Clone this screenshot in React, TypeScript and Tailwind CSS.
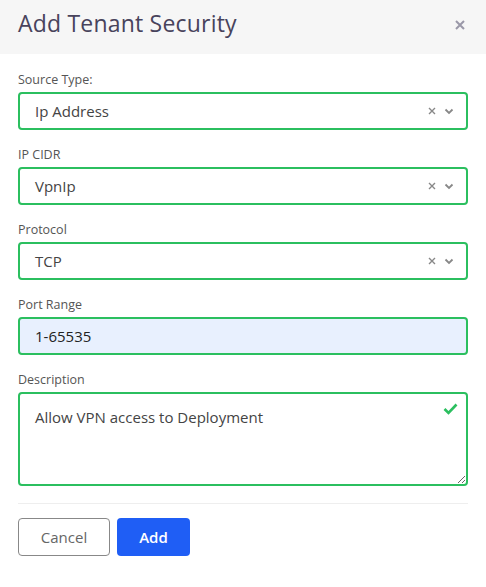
import React from 'react';

const font = { fontFamily: '"Open Sans", "Liberation Sans", sans-serif' };

const Label: React.FC<{ text: string }> = ({ text }) => (
  <div className="h-[18px] flex items-center text-[12.5px] text-[#555]">{text}</div>
);

const SelectBox: React.FC<{ label: string; value: string }> = ({ label, value }) => (
  <div className="mb-[16px]">
    <Label text={label} />
    <div className="mt-[3px] h-[38px] border-2 border-[#2bbf5f] rounded-[4px] flex items-center pl-[15px] pr-[12px]">
      <span className="flex-1 text-[15px] text-[#444]">{value}</span>
      <svg width="8" height="8" viewBox="0 0 8 8" className="mr-[8px]">
        <path d="M1 1L7 7M7 1L1 7" stroke="#888" strokeWidth="1.4" />
      </svg>
      <svg width="10" height="7" viewBox="0 0 10 7">
        <path d="M1.5 1.5L5 5L8.5 1.5" stroke="#888" strokeWidth="1.8" fill="none" />
      </svg>
    </div>
  </div>
);

export default function App() {
  return (
    <div className="w-[486px] h-[587px] bg-white" style={font}>
      <div className="h-[54px] bg-[#f6f6f6] flex items-start justify-between px-[18px] pt-[8px]">
        <h2 className="text-[23px] leading-[30px] tracking-[0.2px] text-[#48435c] font-medium">Add Tenant Security</h2>
        <svg width="10" height="10" viewBox="0 0 10 10" className="mt-[12px] mr-[3px]">
          <path d="M1 1L9 9M9 1L1 9" stroke="#9a98a8" strokeWidth="2" />
        </svg>
      </div>
      <div className="px-[18px] pt-[17px]">
        <SelectBox label="Source Type:" value="Ip Address" />
        <SelectBox label="IP CIDR" value="VpnIp" />
        <SelectBox label="Protocol" value="TCP" />
        <div className="mb-[16px]">
          <Label text="Port Range" />
          <div className="mt-[3px] h-[38px] border-2 border-[#2bbf5f] rounded-[4px] bg-[#e8f0fe] flex items-center pl-[15px] text-[15px] text-[#222]">
            1-65535
          </div>
        </div>
        <div>
          <Label text="Description" />
          <div className="relative mt-[3px]">
            <textarea
              readOnly
              defaultValue="Allow VPN access to Deployment"
              className="block w-full h-[94px] border-2 border-[#2bbf5f] rounded-[4px] pl-[15px] pr-[40px] pt-[12px] text-[15px] text-[#444] outline-none"
              style={font}
            />
            <svg width="15" height="12" viewBox="0 0 15 12" className="absolute right-[10px] top-[11px]">
              <path d="M1.5 6L5.5 10L13.5 1.5" stroke="#2bbf5f" strokeWidth="2.6" fill="none" />
            </svg>
          </div>
        </div>
        <div className="mt-[17px] border-t border-[#eee]" />
        <div className="mt-[14px] flex gap-[7px]">
          <button className="h-[38px] w-[92px] border border-[#888] rounded-[4px] text-[15px] text-[#666]">Cancel</button>
          <button className="h-[38px] w-[73px] bg-[#1f5ef5] rounded-[4px] text-[15px] text-white font-semibold">Add</button>
        </div>
      </div>
    </div>
  );
}
